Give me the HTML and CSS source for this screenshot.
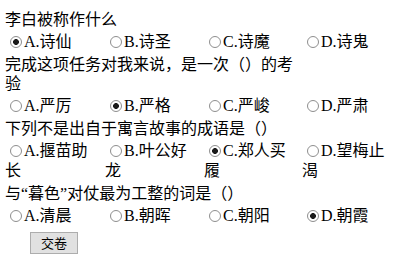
FILE: index.html
```html
<!DOCTYPE html>
<html lang="zh-CN">
<head>
<meta charset="utf-8">
<title>测验</title>
<link rel="stylesheet" href="styles.css">
</head>
<body>
<div class="quiz">
  <div class="q">李白被称作什么</div>
  <div class="opts">
    <label class="opt"><input type="radio" name="q1" checked><span class="k">A.</span>诗仙</label>
    <label class="opt"><input type="radio" name="q1"><span class="k">B.</span>诗圣</label>
    <label class="opt"><input type="radio" name="q1"><span class="k">C.</span>诗魔</label>
    <label class="opt"><input type="radio" name="q1"><span class="k">D.</span>诗鬼</label>
  </div>

  <div class="q">完成这项任务对我来说，是一次（）的考验</div>
  <div class="opts">
    <label class="opt"><input type="radio" name="q2"><span class="k">A.</span>严厉</label>
    <label class="opt"><input type="radio" name="q2" checked><span class="k">B.</span>严格</label>
    <label class="opt"><input type="radio" name="q2"><span class="k">C.</span>严峻</label>
    <label class="opt"><input type="radio" name="q2"><span class="k">D.</span>严肃</label>
  </div>

  <div class="q">下列不是出自于寓言故事的成语是（）</div>
  <div class="opts">
    <label class="opt"><input type="radio" name="q3"><span class="k">A.</span>揠苗助长</label>
    <label class="opt"><input type="radio" name="q3"><span class="k">B.</span>叶公好龙</label>
    <label class="opt"><input type="radio" name="q3" checked><span class="k">C.</span>郑人买履</label>
    <label class="opt"><input type="radio" name="q3"><span class="k">D.</span>望梅止渴</label>
  </div>

  <div class="q">与“暮色”对仗最为工整的词是（）</div>
  <div class="opts">
    <label class="opt"><input type="radio" name="q4"><span class="k">A.</span>清晨</label>
    <label class="opt"><input type="radio" name="q4"><span class="k">B.</span>朝晖</label>
    <label class="opt"><input type="radio" name="q4"><span class="k">C.</span>朝阳</label>
    <label class="opt"><input type="radio" name="q4" checked><span class="k">D.</span>朝霞</label>
  </div>

  <div class="actions"><button type="button" class="submit">交卷</button></div>
</div>
</body>
</html>
```
FILE: styles.css
```css
html, body {
  margin: 0;
  padding: 0;
  background: #fff;
}
body {
  padding: 10px 5px 0 5px;
  font-family: "Liberation Serif", "Noto Sans CJK SC", serif;
  font-size: 16px;
  color: #000;
}
.quiz {
  display: flex;
  flex-direction: column;
}
.q {
  width: 300px;
  line-height: 19px;
}
.opts {
  display: grid;
  grid-template-columns: 100px 99px 98px 1fr;
  margin: 3px 0;
}
.opt {
  display: block;
  padding-right: 6px;
  line-height: 20px;
}
.opt input {
  appearance: none;
  -webkit-appearance: none;
  box-sizing: border-box;
  width: 12px;
  height: 12px;
  margin: 0 2px -1px 5px;
  border: 1px solid #8e8e8e;
  border-radius: 50%;
  background: #fff;
  vertical-align: baseline;
}
.opt input:checked {
  background: radial-gradient(circle, #1a1a1a 0 2.6px, #fff 3.2px);
}
.k {
  font-family: "Liberation Serif", serif;
}
.actions {
  margin-top: 3px;
  padding-left: 25px;
}
.submit {
  box-sizing: border-box;
  width: 48px;
  height: 22px;
  padding: 0;
  font-family: "Noto Sans CJK SC", sans-serif;
  font-size: 13px;
  line-height: 18px;
  color: #000;
  background: #e1e1e1;
  border: 1px solid #adadad;
  border-radius: 0;
}
```
